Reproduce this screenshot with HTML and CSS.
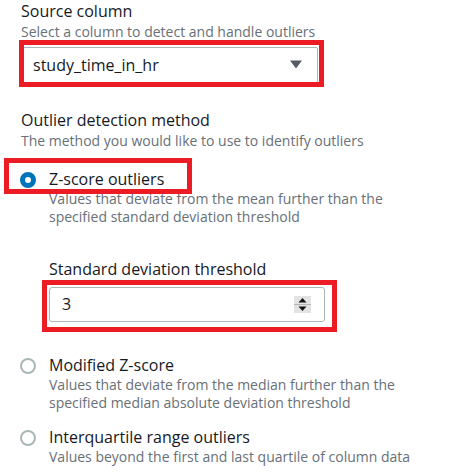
FILE: index.html
```html
<!DOCTYPE html>
<html lang="en">
<head>
<meta charset="utf-8">
<title>Outliers</title>
<link rel="stylesheet" href="styles.css">
</head>
<body>
<div class="page">
  <div class="field">
    <div class="label">Source column</div>
    <div class="desc head-desc">Select a column to detect and handle outliers</div>
    <div class="select annot annot-select">
      <span class="value">study_time_in_hr</span>
      <svg class="caret" width="12" height="9" viewBox="0 0 12 9"><polygon points="0,0.5 12,0.5 6,8.5" fill="#545b64"/></svg>
    </div>
  </div>

  <div class="field field-method">
    <div class="label">Outlier detection method</div>
    <div class="desc head-desc">The method you would like to use to identify outliers</div>
    <div class="options">
      <div class="option option-first">
        <span class="radio checked"></span>
        <div class="opt-body">
          <div class="opt-label">Z-score outliers</div>
          <div class="desc opt-desc">Values that deviate from the mean further than the specified standard deviation threshold</div>
          <div class="subfield">
            <div class="label">Standard deviation threshold</div>
            <div class="input annot annot-input">
              <span class="value">3</span>
              <svg class="spin" width="17" height="17" viewBox="0 0 17 17">
                <rect x="0" y="0" width="17" height="17" fill="#e3e3e3"/>
                <rect x="0" y="8" width="17" height="1" fill="#b4b4b4"/>
                <polygon points="8.5,2 12.5,6.5 4.5,6.5" fill="#111"/>
                <polygon points="4.5,10.5 12.5,10.5 8.5,15" fill="#111"/>
              </svg>
            </div>
          </div>
        </div>
        <span class="annot-radio"></span>
      </div>
      <div class="option option-mod">
        <span class="radio"></span>
        <div class="opt-body">
          <div class="opt-label">Modified Z-score</div>
          <div class="desc opt-desc">Values that deviate from the median further than the specified median absolute deviation threshold</div>
        </div>
      </div>
      <div class="option option-iqr">
        <span class="radio"></span>
        <div class="opt-body">
          <div class="opt-label">Interquartile range outliers</div>
          <div class="desc opt-desc">Values beyond the first and last quartile of column data</div>
        </div>
      </div>
    </div>
  </div>
</div>
</body>
</html>
```
FILE: styles.css
```css
html, body {
  margin: 0;
  padding: 0;
  background: #ffffff;
}

body {
  font-family: "Open Sans", "Noto Sans", sans-serif;
  color: #16191f;
  width: 469px;
  height: 472px;
  overflow: hidden;
}

.page {
  padding-left: 21px;
}

.label,
.opt-label {
  font-size: 16px;
  line-height: 22px;
  color: #16191f;
}

.desc {
  font-size: 14px;
  line-height: 17.5px;
  color: #687078;
}

.head-desc {
  padding-top: 1px;
}

.opt-desc {
  max-width: 372px;
}

/* select */
.select {
  margin-top: 6.5px;
  width: 297px;
  height: 36px;
  box-sizing: border-box;
  border: 1px solid #aab7b8;
  border-radius: 2px;
  padding: 0 15px 0 11px;
  display: flex;
  align-items: center;
  justify-content: space-between;
  font-size: 16px;
  line-height: 22px;
  color: #16191f;
}

.caret {
  display: block;
  margin-top: -2px;
}

/* annotation overlays (red highlight boxes drawn over the screenshot) */
.annot {
  position: relative;
}

.annot::after {
  content: "";
  position: absolute;
  border: 5px solid #ec1c24;
  pointer-events: none;
}

.annot-select::after {
  left: -3px;
  top: -8px;
  right: -7px;
  bottom: -5px;
}

.annot-input::after {
  left: -8px;
  top: -8px;
  right: -13px;
  bottom: -11px;
}

.field-method {
  margin-top: 25.5px;
}

.options {
  margin-top: 19.3px;
}

.option {
  position: relative;
  display: grid;
  grid-template-columns: 28px 1fr;
}

.option-mod {
  margin-top: 32.5px;
}

.option-iqr {
  margin-top: 14.6px;
}

.radio {
  box-sizing: border-box;
  width: 16px;
  height: 16px;
  margin: 4px 0 0 -1px;
  border-radius: 50%;
  border: 2px solid #aab7b8;
  background: #fff;
}

.radio.checked {
  border: 5px solid #0073bb;
}

.annot-radio {
  position: absolute;
  left: -17px;
  top: -10px;
  width: 188px;
  height: 36px;
  box-sizing: border-box;
  border: 5px solid #ec1c24;
  pointer-events: none;
}

.subfield {
  margin-top: 32.5px;
}

.input {
  margin-top: 7px;
  width: 276px;
  height: 35px;
  box-sizing: border-box;
  border: 1px solid #aab7b8;
  border-radius: 3px;
  padding: 0 13px 0 12px;
  display: flex;
  align-items: center;
  justify-content: space-between;
  font-size: 16px;
  line-height: 22px;
}

.spin {
  display: block;
}
```
